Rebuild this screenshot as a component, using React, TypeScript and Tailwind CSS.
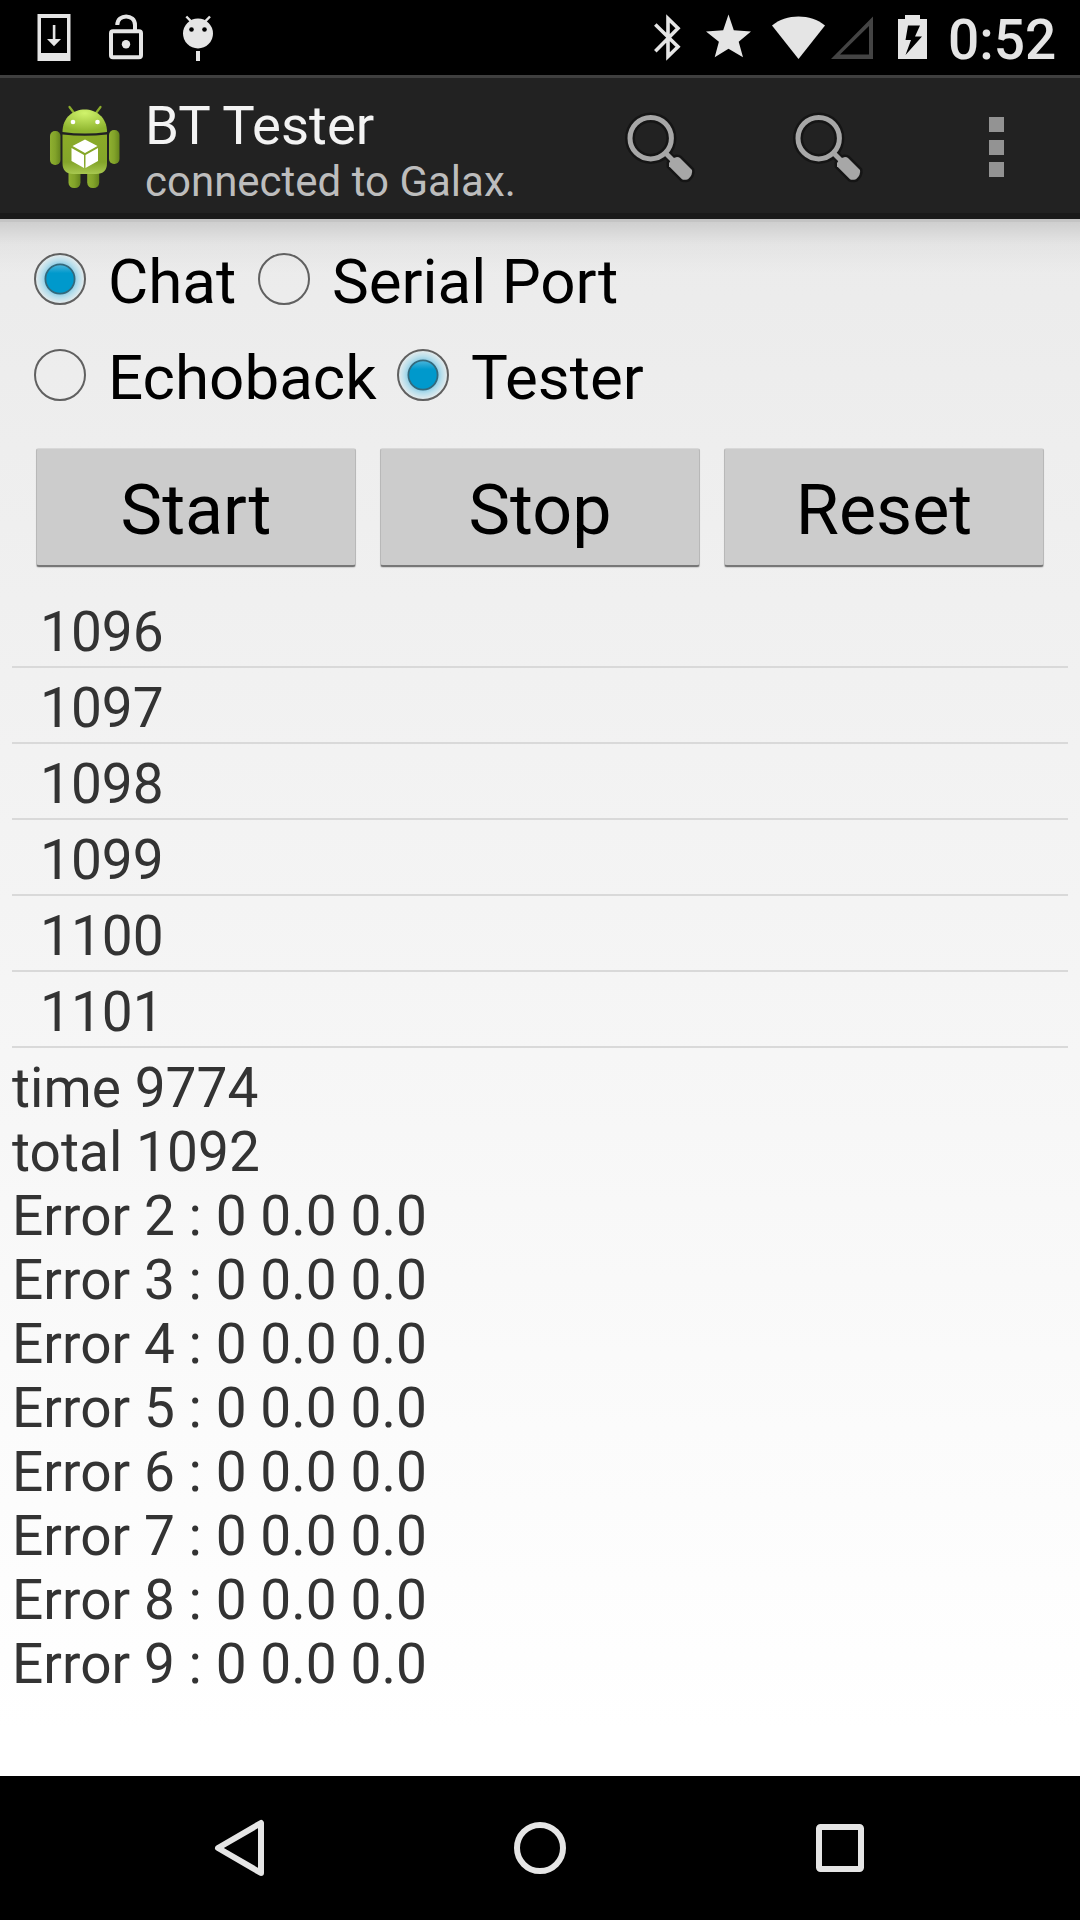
import type { ReactNode } from "react";

function Glyph({ x, y, w, h, children }: { x: number; y: number; w: number; h: number; children: ReactNode }) {
  return (
    <svg className="block shrink-0" width={w} height={h} viewBox={`${x} ${y} ${w} ${h}`} fill="#e5e5e5">
      {children}
    </svg>
  );
}

function StatusBar() {
  return (
    <header className="flex h-[75px] items-start justify-between bg-black">
      <div className="flex">
        <Glyph x={0} y={0} w={90} h={75}>
          <path fillRule="evenodd" d="M37.5 14h33v47h-33zM41 18v35h26V18z" />
          <path d="M52.8 25h2.6v14h5.6L54 46.3 47 39h5.8z" />
        </Glyph>
        <Glyph x={90} y={0} w={70} h={75}>
          <rect x="111" y="31.3" width="30" height="25.9" rx="2" fill="none" stroke="#e5e5e5" strokeWidth="4" />
          <path d="M117.3 25c0-11.5 17.7-11.500 17.700 0v5" fill="none" stroke="#e5e5e5" strokeWidth="4" />
          <circle cx="126" cy="44.200" r="4.200" />
        </Glyph>
        <Glyph x={160} y={0} w={70} h={75}>
          <circle cx="198" cy="33.500" r="15" />
          <path d="M186.300 16.500l5 5.200M210 16.500l-5 5.200" stroke="#e5e5e5" strokeWidth="2.400" />
          <path d="M196 51h4v10h-4z" />
          <circle cx="191.500" cy="29.500" r="2.300" fill="#000" />
          <circle cx="204.500" cy="29.500" r="2.300" fill="#000" />
        </Glyph>
      </div>
      <div className="flex pr-[25px]">
        <Glyph x={640} y={0} w={55} h={75}>
          <path d="M655.300 24.500L678 46.800 668 56.500V18.500L678 28.300 655.300 51.200" fill="none" stroke="#e5e5e5" strokeWidth="3.600" />
        </Glyph>
        <Glyph x={695} y={0} w={65} h={75}>
          <path d="M728.500 14.500l5.300 15.700 17.200 1.300-12.300 10.200 4.300 15.600-14.500-8.600-13.800 8.600 4.200-15.600-12.900-10.200 17.200-1.300z" />
        </Glyph>
        <Glyph x={760} y={0} w={70} h={75}>
          <path d="M772 25.500C786 13.500 811 13.500 825 25.500L798.500 59z" />
        </Glyph>
        <Glyph x={830} y={0} w={60} h={75}>
          <path fillRule="evenodd" fill="#444" d="M831 59L873 16.500V59zM840 54.500h29V26z" />
        </Glyph>
        <Glyph x={890} y={0} w={58} h={75}>
          <path fillRule="evenodd" d="M898 19h7v-4h15v4h7v40h-29zM908 25.500l-2.500 14.500h5.500l-5.500 15 16.500-18.500h-7l5-11z" />
        </Glyph>
        <span className="w-[107px] whitespace-nowrap text-[55px] leading-[80px] font-medium text-[#e5e5e5]">0:52</span>
      </div>
    </header>
  );
}

function AppIcon() {
  return (
    <svg className="block shrink-0" width="90" height="100" viewBox="0 0 90 100">
      <defs>
        <linearGradient id="body" x1="0" y1="0" x2="0" y2="1">
          <stop offset="0" stopColor="#8bab27" />
          <stop offset=".7" stopColor="#84a52a" />
          <stop offset="1" stopColor="#a8c850" />
        </linearGradient>
        <linearGradient id="limb" x1="0" y1="0" x2="1" y2="0">
          <stop offset="0" stopColor="#8fb030" />
          <stop offset=".5" stopColor="#82a32a" />
          <stop offset="1" stopColor="#66851d" />
        </linearGradient>
        <radialGradient id="head" cx=".5" cy=".15" r=".75">
          <stop offset="0" stopColor="#d0f36c" />
          <stop offset="1" stopColor="#8fb52f" />
        </radialGradient>
      </defs>
      <rect x="28.500" y="70" width="12" height="23" rx="5.500" fill="url(#limb)" />
      <rect x="47.200" y="70" width="12" height="23" rx="5.500" fill="url(#limb)" />
      <rect x="10" y="36" width="10.500" height="34" rx="5" fill="url(#limb)" />
      <rect x="69" y="35" width="10.500" height="34" rx="5" fill="url(#limb)" />
      <path d="M29.500 12l4.500 6M60.500 12l-4.500 6" stroke="#8cad2c" strokeWidth="2.200" strokeLinecap="round" />
      <path d="M22.500 37C22.500 7 67 7 67 37Q45 40 22.500 37z" fill="url(#head)" />
      <path d="M22.500 39.500Q45 42 67 39.500V68Q67 79 56 79H33.500Q22.500 79 22.500 68z" fill="url(#body)" />
      <circle cx="33" cy="27" r="2.300" fill="#fff" />
      <circle cx="57.500" cy="27" r="2.300" fill="#fff" />
      <path d="M45 44.500L57.500 51 45 58 32.500 51zM31.500 53l12.500 7v13l-12.500-7zM58 53l-12.500 7v13L58 66z" fill="#fff" />
    </svg>
  );
}

function SearchIcon() {
  return (
    <svg className="block" width="80" height="80" viewBox="620 106 80 80">
      <g stroke="#151515" fill="#151515">
        <circle cx="650.700" cy="138.200" r="20.700" fill="none" strokeWidth="10" />
        <path d="M665 152.500l9 9" strokeWidth="9" />
        <path d="M669 163l3-4.500 5-1.500q2 0 3 1l12 12q1 5-4 9.300-4 1-6 0l-13-13z" strokeWidth="5" strokeLinejoin="round" />
      </g>
      <circle cx="650.700" cy="138.200" r="20.700" fill="none" stroke="#a7a7a7" strokeWidth="5" />
      <path d="M665.500 153l8 8" stroke="#a7a7a7" strokeWidth="5" />
      <path d="M669 163l3-4.500 5-1.500q2 0 3 1l12 12q1 5-4 9.300-4 1-6 0l-13-13z" fill="#a7a7a7" />
    </svg>
  );
}

function ActionBar() {
  return (
    <div className="flex h-36 border-t-[3px] border-b-[6px] border-t-[#3f3f3f] border-b-[#1a1a1a] bg-[#222]">
      <div className="ml-10 pt-[17px]">
        <AppIcon />
      </div>
      <div className="ml-[15px] w-[475px] whitespace-nowrap pt-[16px]">
        <h1 className="text-[54.5px] leading-[63px] text-[#f3f3f3]">BT Tester</h1>
        <p className="text-[42px] leading-[50px] text-[#bdbdbd]">connected to Galax.</p>
      </div>
      <button className="h-[80px] w-[168px] pt-7"><SearchIcon /></button>
      <button className="h-[80px] w-[168px] pt-7"><SearchIcon /></button>
      <button className="ml-[33px] mt-[39px] flex h-[60px] w-[15px] flex-col justify-between">
        <span className="h-[15px] w-full bg-[#939393]" />
        <span className="h-[15px] w-full bg-[#939393]" />
        <span className="h-[15px] w-full bg-[#939393]" />
      </button>
    </div>
  );
}

function Radio({ label, checked, width }: { label: string; checked?: boolean; width: string }) {
  return (
    <label className={`flex h-24 items-center ${width}`}>
      <svg className="mr-[22px] block shrink-0" width="52" height="52" viewBox="0 0 52 52">
        <defs>
          <radialGradient id="glow">
            <stop offset=".55" stopColor="#86c9e4" />
            <stop offset=".75" stopColor="#b9dfec" />
            <stop offset="1" stopColor="#eaecec" />
          </radialGradient>
          <linearGradient id="dot" x1="0" y1="0" x2="0" y2="1">
            <stop offset="0" stopColor="#4db6dc" />
            <stop offset=".3" stopColor="#0099cc" />
          </linearGradient>
        </defs>
        <circle cx="26" cy="26" r="25" fill={checked ? "url(#glow)" : "none"} stroke="#606060" strokeWidth="2" />
        {checked && <circle cx="26" cy="26" r="14.600" fill="url(#dot)" stroke="#33697c" strokeWidth="1.800" />}
      </svg>
      <span className="whitespace-nowrap pt-[6px] text-[61.9px] leading-[72px] text-black">{label}</span>
    </label>
  );
}

const rows = ["1096", "1097", "1098", "1099", "1100", "1101"];
const stats = [
  "time 9774",
  "total 1092",
  ...[2, 3, 4, 5, 6, 7, 8, 9].map((n) => `Error ${n} : 0 0.0 0.0`),
];

export default function App() {
  return (
    <div className="flex h-[1920px] w-[1080px] flex-col overflow-hidden bg-black font-['Roboto',sans-serif]">
      <StatusBar />
      <ActionBar />
      <main className="flex-1 bg-linear-to-b from-[#ebebeb] to-white to-[97%]">
        <div className="h-[373px] border-t-[3px] border-[#c4c4c4] bg-linear-to-b from-black/12 via-black/3 via-[6%] to-transparent to-[14%]">
          <div className="ml-[34px] flex pt-[9px]">
            <Radio label="Chat" checked width="w-[224px]" />
            <Radio label="Serial Port" width="w-[400px]" />
          </div>
          <div className="ml-[34px] flex">
            <Radio label="Echoback" width="w-[363px]" />
            <Radio label="Tester" checked width="w-[300px]" />
          </div>
          <div className="mx-9 mt-[25px] grid grid-cols-3 gap-6">
            {["Start", "Stop", "Reset"].map((t) => (
              <button
                key={t}
                className="h-[119px] rounded-[3px] border-x border-t border-b-2 border-x-[#b8b8b8] border-t-[#d8d8d8] border-b-[#777] bg-[#ccc] pt-[5px] text-[70px] leading-[82px] text-black shadow-[0_1px_1px_#0002]"
              >
                {t}
              </button>
            ))}
          </div>
        </div>
        <ul className="mx-3">
          {rows.map((r) => (
            <li key={r} className="h-[76px] border-b-2 border-[#d9d9d9] pt-2 pl-7 text-[55px] leading-[64px] text-[#333]">
              {r}
            </li>
          ))}
        </ul>
        <div className="mt-2 ml-3 text-[55px] leading-[64px] tracking-[0.05px] text-[#333]">
          {stats.map((s) => (
            <p key={s}>{s}</p>
          ))}
        </div>
      </main>
      <nav className="flex h-36 items-center justify-between bg-black px-[200px]">
        <svg width="80" height="80" viewBox="200 1808 80 80" fill="none" stroke="#e5e5e5" strokeWidth="6" strokeLinejoin="round">
          <path d="M261 1823v50L218 1848z" />
        </svg>
        <svg width="80" height="80" viewBox="500 1808 80 80" fill="none" stroke="#e5e5e5" strokeWidth="6">
          <circle cx="540" cy="1848" r="23" />
        </svg>
        <svg width="80" height="80" viewBox="800 1808 80 80" fill="none" stroke="#e5e5e5" strokeWidth="6">
          <rect x="819" y="1827" width="42" height="42" rx="1.500" />
        </svg>
      </nav>
    </div>
  );
}
